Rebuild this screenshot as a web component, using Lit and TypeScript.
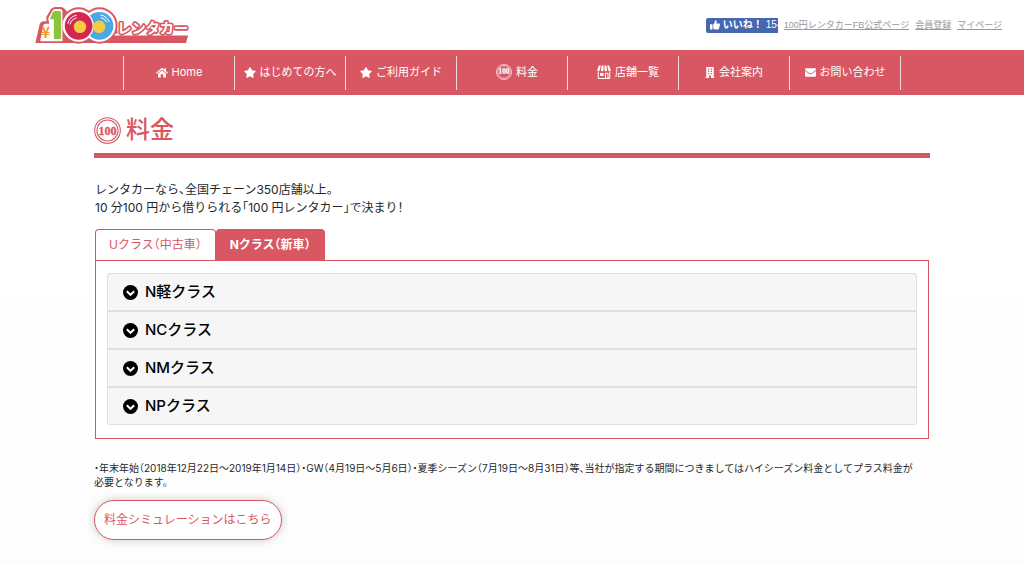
import { LitElement, html, css, svg } from "lit";
import { customElement, state } from "lit/decorators.js";
import { classMap } from "lit/directives/class-map.js";

const coin = svg`
  <circle cx="20" cy="20" r="19" fill="none" stroke="currentColor" stroke-width="1.6"/>
  <circle cx="20" cy="20" r="15.600" fill="none" stroke="currentColor" stroke-width="1.6"/>
  <text x="20" y="26" text-anchor="middle" class="coin-text">100</text>`;

const star = svg`<path fill="currentColor" d="M259.3 17.8L194 150.2 47.9 171.5c-26.2 3.8-36.7 36.1-17.7 54.6l105.700 103-25 145.500c-4.500 26.300 23.200 46 46.400 33.700L288 439.600l130.700 68.700c23.200 12.200 50.900-7.400 46.400-33.700l-25-145.500 105.700-103c19-18.500 8.500-50.800-17.700-54.600L382 150.200 316.700 17.800c-11.700-23.600-45.600-23.900-57.400 0z"/>`;

const icons = {
  home: html`<svg class="icon w12" viewBox="0 0 24 20" aria-hidden="true"><path fill="currentColor" d="M12 0.500 0.300 10.300a.6.6 0 0 0 0 .9l.8.9a.6.6 0 0 0 .9 0L12 3.900l10 8.200a.6.6 0 0 0 .9 0l.8-.9a.6.6 0 0 0 0-.9L20 7.200V1.500h-3v3.200zM12 6 4 12.600V19q0 .8.800.8H9.500V13.500h5V19.800h4.700q.8 0 .8-.8v-6.400z"/></svg>`,
  star: html`<svg class="icon w12" viewBox="0 0 576 512" aria-hidden="true">${star}</svg>`,
  coin: html`<svg class="icon custom w16" viewBox="0 0 40 40" aria-hidden="true">${coin}</svg>`,
  shop: html`<svg class="icon custom w14" viewBox="0 0 28 28" aria-hidden="true">
    <path fill="currentColor" d="M4 1H7.500L5.500 10Q5 12.500 2.800 12.500 0 12 0.500 9.500zM9.500 1h3.500v9q-.3 2.500-2.800 2.500T7.700 10zM15 1h3.500l1.800 9q0 2.500-2.500 2.500T15 10zM20.500 1H24l3.500 8.500q.5 2.500-2.300 3Q23 12.500 22.500 10zM6 16h7v6H6z"/>
    <path fill="none" stroke="currentColor" stroke-width="2" d="M2.500 13V27H25.500V13M17 27V16.500h5V27"/></svg>`,
  building: html`<svg class="icon w10" viewBox="0 0 18 22" aria-hidden="true"><path fill="currentColor" fill-rule="evenodd" d="M1.500 0h15v20.500H18V22h-7v-5H7v5H0v-1.500h1.500zM5 3v2.500h2.500V3zm5.500 0v2.500H13V3zM5 7.500V10h2.500V7.500zm5.500 0V10H13V7.500zM5 12v2.500h2.500V12zm5.500 0v2.500H13V12z"/></svg>`,
  mail: html`<svg class="icon w11" viewBox="0 0 22 17" aria-hidden="true"><path fill="currentColor" d="M2 0h18a2 2 0 0 1 2 2v.8C19 5.300 16 7.500 13.500 9.300 12 10.400 10 10.400 8.500 9.300 6 7.500 3 5.300 0 2.800V2a2 2 0 0 1 2-2zM0 5c2.500 2 5 3.900 7.500 5.700 2.200 1.600 4.800 1.600 7 0C17 8.900 19.500 7 22 5v10a2 2 0 0 1-2 2H2a2 2 0 0 1-2-2z"/></svg>`,
};

const menu = [
  { icon: icons.home, label: "Home" },
  { icon: icons.star, label: "はじめての方へ" },
  { icon: icons.star, label: "ご利用ガイド" },
  { icon: icons.coin, label: "料金" },
  { icon: icons.shop, label: "店舗一覧" },
  { icon: icons.building, label: "会社案内" },
  { icon: icons.mail, label: "お問い合わせ" },
];

const tabs = [
  { label: "Uクラス（中古車）", rows: ["U軽クラス", "UCクラス", "UMクラス", "UPクラス"] },
  { label: "Nクラス（新車）", rows: ["N軽クラス", "NCクラス", "NMクラス", "NPクラス"] },
];

const logo = html`<svg class="logo" viewBox="0 0 462 112" role="img" aria-label="100円レンタカー">
  <g fill="#d95763">
    <path d="M-4 109 9 52Q11 44 20 43H30L29 30 42 8Q46 0 56 0H72Q80 0 86 7L92 14 240 44 246 84H459L452 109z"/>
    <circle cx="127" cy="56" r="55"/><circle cx="190" cy="56" r="55"/>
  </g>
  <path fill="#fff" d="M240 80H462V86H234zM11 101 20 56Q21 51 26 51H38L35 34 47 12Q50 6 58 6H70Q78 6 78 14V104H11z"/>
  <circle cx="190" cy="56" r="49" fill="#fff"/><circle cx="127" cy="56" r="49" fill="#fff"/>
  <circle cx="190" cy="57" r="42" fill="#49a8e5"/>
  <circle cx="127" cy="57" r="46" fill="#fff"/>
  <circle cx="127" cy="57" r="42" fill="#d42650"/>
  <g fill="none" stroke="#fff" stroke-width="3">
    <path d="M94 51a34 34 0 0 1 27-26M101 53a27 27 0 0 1 20-20M193 24a34 34 0 0 1 26 21M194 32a26 26 0 0 1 18 14"/>
  </g>
  <circle cx="131" cy="60" r="19" fill="#f5cb43"/><circle cx="189" cy="60" r="19" fill="#f5cb43"/>
  <path fill="#8bc540" d="M48 17Q50 12 55 12H68Q74 12 74 18V97H52V37H40z"/>
  <text x="14" y="95" class="logo-yen">¥</text>
  <text x="244" y="80" class="logo-name">レンタカー</text>
</svg>`;

@customElement("app-root")
export class AppRoot extends LitElement {
  @state() private tab = 1;
  @state() private open = -1;

  static styles = css`
    :host {
      --red: #d95763;
      display: block;
      min-height: 100vh;
      background: linear-gradient(#fff 40%, #fdfdfd);
      color: #24282c;
      font-family: Inter, "Noto Sans CJK JP", sans-serif;
      font-size: 12px;
      line-height: 18px;
      font-feature-settings: "halt";
    }
    *, *::before, *::after { box-sizing: border-box; }
    a { color: inherit; }
    button { font: inherit; font-feature-settings: inherit; cursor: pointer; margin: 0; }
    h1, h2, p { margin: 0; font-weight: 400; }

    .header {
      display: flex;
      justify-content: space-between;
      align-items: center;
      height: 50px;
      padding: 0 22px 0 36px;
    }
    .logo { display: block; width: 154px; height: 37px; overflow: visible; }
    .logo-yen { font: 700 46px "Noto Sans CJK JP", sans-serif; fill: #f29a2e; }
    .logo-name {
      font: 700 43px "Noto Sans CJK JP", sans-serif;
      fill: #fff;
      stroke: #d95763;
      stroke-width: 10px;
      stroke-linejoin: round;
      paint-order: stroke;
    }
    .utility {
      display: flex;
      align-items: center;
      gap: 6px;
      font: 9px/14px "Liberation Sans", "Noto Sans CJK JP", sans-serif;
      color: #999;
    }
    .like {
      display: flex;
      align-items: center;
      gap: 3px;
      width: 72px;
      height: 15px;
      padding: 0 0 0 4px;
      border: 0;
      border-radius: 2px 0 0 2px;
      background: #4567b0;
      color: #fff;
      font-size: 10px;
      overflow: hidden;
      white-space: nowrap;
    }
    .like b { font-weight: 700; }
    .thumb { width: 10px; height: 10px; flex: none; }

    .nav { background: var(--red); color: #fff; padding: 6px 0 5px; }
    .menu {
      display: grid;
      grid-template-columns: repeat(7, 1fr);
      max-width: 778px;
      margin: 0 auto;
      padding: 0;
      list-style: none;
      border-right: 1px solid #f7dde0;
    }
    .menu a {
      display: flex;
      justify-content: center;
      align-items: center;
      gap: 4px;
      height: 34px;
      padding-bottom: 2px;
      border-left: 1px solid #f7dde0;
      text-decoration: none;
      font-size: 11px;
      white-space: nowrap;
    }
    .icon { flex: none; }
    .custom { margin-left: 10px; }
    .w10 { width: 10px; height: 11px; }
    .w11 { width: 11px; height: 9px; }
    .w12 { width: 12px; height: 11px; }
    .w14 { width: 14px; height: 14px; }
    .w16 { width: 16px; height: 16px; }
    .coin-text { font: 700 18px "Liberation Serif", serif; fill: currentColor; stroke: currentColor; stroke-width: 0.5px; }

    .main { max-width: 836px; margin: 0 auto; padding: 20px 0; }
    .title {
      display: flex;
      align-items: flex-start;
      gap: 5px;
      padding-bottom: 8px;
      border-bottom: 5px solid var(--red);
      color: var(--red);
      font-size: 24px;
      font-weight: 500;
      line-height: 30px;
    }
    .title-icon { width: 27px; height: 27px; margin-top: 2px; }
    .intro { padding: 23px 1px 12px; }

    .tabs { display: flex; padding-left: 1px; }
    .tab {
      height: 31px;
      padding: 0 13px;
      border: 1px solid var(--red);
      border-bottom: 0;
      border-radius: 4px 4px 0 0;
      background: #fff;
      color: var(--red);
    }
    .tab.active { background: var(--red); color: #fff; font-weight: 700; }
    .panel { margin: 0 1px; padding: 12px 11px 13px; border: 1px solid var(--red); background: #fff; }
    .accordion { border: 1px solid #dfdfdf; border-radius: 3px; background: #f6f6f6; overflow: hidden; }
    .row + .row { border-top: 2px solid #e0e0e0; }
    .row-button {
      display: flex;
      align-items: center;
      gap: 7px;
      width: 100%;
      height: 36px;
      padding: 0 15px;
      border: 0;
      background: none;
      color: #000;
      font-size: 15px;
      font-weight: 500;
    }
    .chevron { width: 15px; height: 15px; }
    .row.open .chevron { transform: rotate(180deg); }
    .note { padding: 22px 12px 11px 0; font-size: 10px; line-height: 14px; }
    .simulate {
      display: inline-flex;
      align-items: center;
      height: 40px;
      padding: 0 9px;
      border: 1px solid var(--red);
      border-radius: 20px;
      background: #fff;
      color: var(--red);
      text-decoration: none;
      box-shadow: 0 0 10px rgba(0, 0, 0, 0.2);
    }
  `;

  private row(label: string, i: number) {
    const open = this.open === i;
    return html`<h2 class=${classMap({ row: true, open })}>
      <button class="row-button" aria-expanded=${open} @click=${() => (this.open = open ? -1 : i)}>
        <svg class="chevron" viewBox="0 0 15 15" aria-hidden="true">
          <circle cx="7.500" cy="7.500" r="7.500" fill="#000"/>
          <path d="M3.800 6.200 7.500 9.800l3.700-3.600" fill="none" stroke="#fff" stroke-width="2"/>
        </svg>${label}
      </button>
    </h2>`;
  }

  render() {
    return html`
      <header class="header">
        ${logo}
        <div class="utility">
          <button class="like">
            <svg class="thumb" viewBox="0 0 20 20" aria-hidden="true"><path fill="#fff" d="M0 8.500h5V19H0zM6.500 9C8.500 7 9.500 5 9.700 2.500 9.800.8 10.500.3 11.500.5c2 .4 2.500 3 1 6.500H18c2 0 2.500 2.500 1 3.300 1.200.9.800 2.700-.4 3.100.8 1 .3 2.500-.9 2.800.6 1.400-.2 2.800-1.700 2.800h-5c-2 0-3-.5-4.500-1.300z"/></svg>
            <b>いいね！</b><span>154</span>
          </button>
          <a href="#">100円レンタカーFB公式ページ</a>
          <a href="#">会員登録</a>
          <a href="#">マイページ</a>
        </div>
      </header>
      <nav class="nav">
        <ul class="menu">
          ${menu.map((m) => html`<li><a href="#">${m.icon}<span>${m.label}</span></a></li>`)}
        </ul>
      </nav>
      <main class="main">
        <h1 class="title">
          <svg class="title-icon" viewBox="0 0 40 40" aria-hidden="true">${coin}</svg>料金
        </h1>
        <p class="intro">レンタカーなら、全国チェーン350店舗以上。<br>10 分100 円から借りられる「100 円レンタカー」で決まり！</p>
        <div class="tabs" role="tablist">
          ${tabs.map((t, i) => html`<button
            class=${classMap({ tab: true, active: i === this.tab })}
            role="tab" aria-selected=${i === this.tab}
            @click=${() => { this.tab = i; this.open = -1; }}>${t.label}</button>`)}
        </div>
        <section class="panel" role="tabpanel">
          <div class="accordion">${tabs[this.tab].rows.map((r, i) => this.row(r, i))}</div>
        </section>
        <p class="note">・年末年始（2018年12月22日～2019年1月14日）・GW（4月19日～5月6日）・夏季シーズン（7月19日～8月31日）等、当社が指定する期間につきましてはハイシーズン料金としてプラス料金が必要となります。</p>
        <a class="simulate" href="#">料金シミュレーションはこちら</a>
      </main>
    `;
  }
}
